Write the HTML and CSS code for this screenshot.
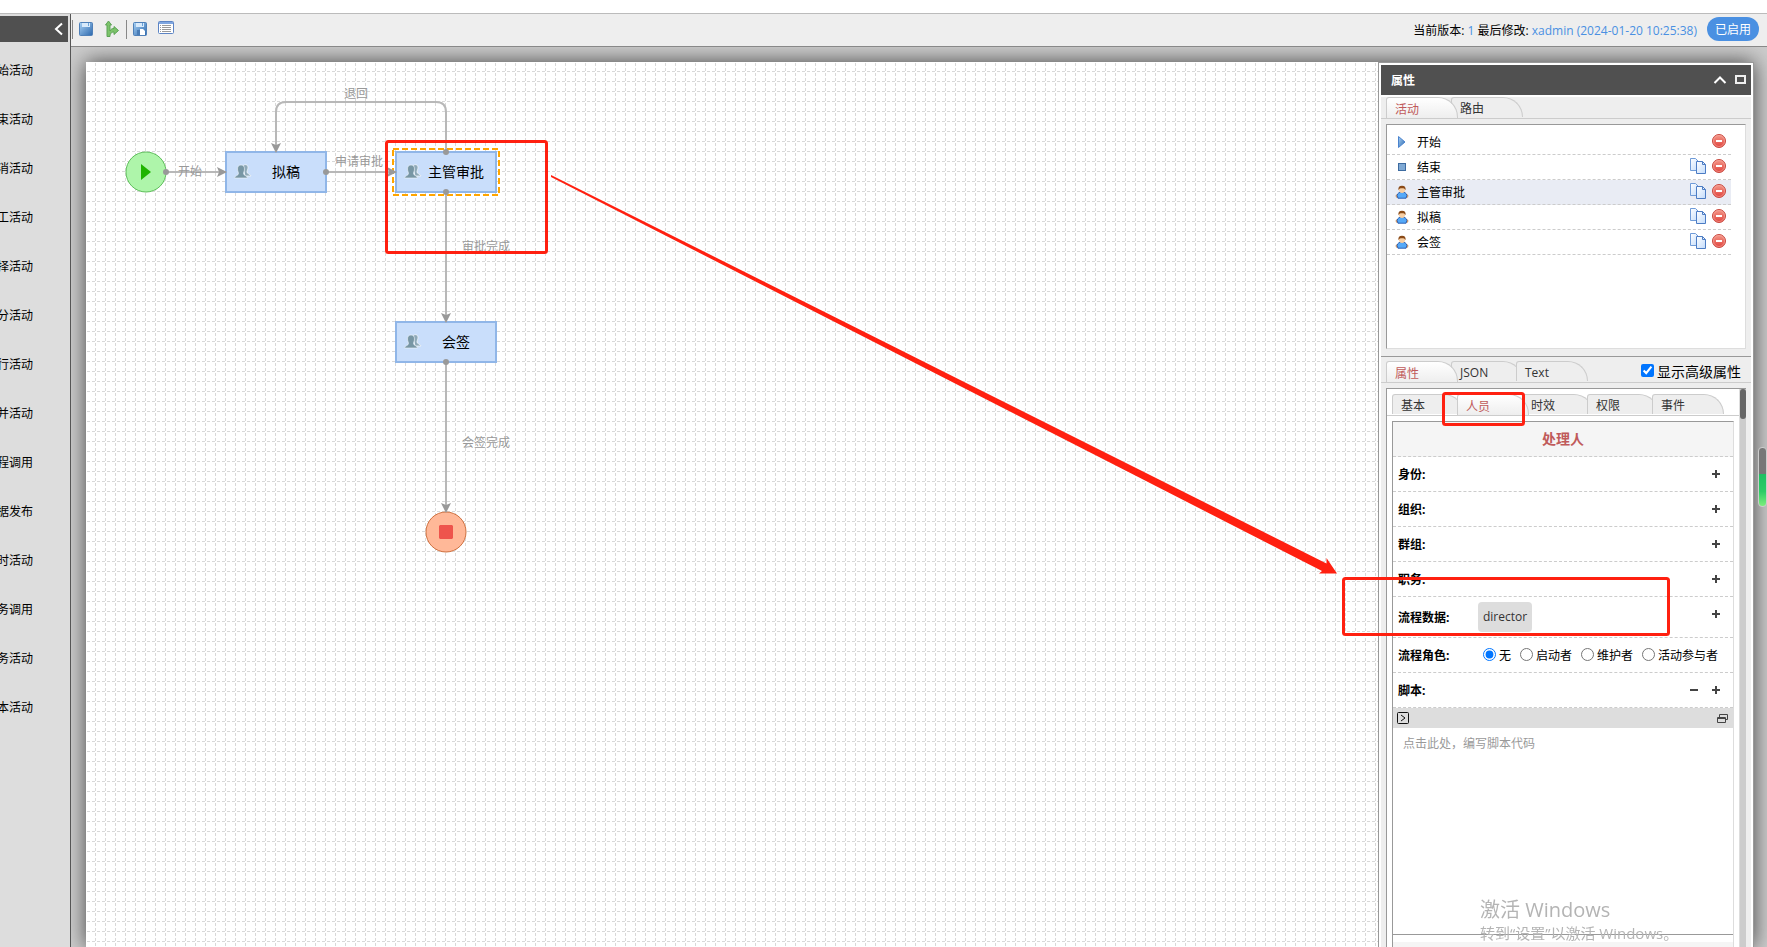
FILE: index.html
```html
<!DOCTYPE html>
<html lang="zh-CN">
<head>
  <meta charset="UTF-8" />
  <meta name="viewport" content="width=device-width, initial-scale=1.0"/>
  <title>流程设计</title>
  <link rel="stylesheet" href="styles.css">
</head>
<body>

  <!-- Shared icons -->
  <svg class="defs" width="0" height="0">
    <defs>
      <linearGradient id="blue" x1="0" y1="0" x2="1" y2="1">
        <stop offset="0" stop-color="#a9d2f5"/><stop offset="1" stop-color="#2c68ad"/>
      </linearGradient>
      <linearGradient id="red" x1="0" y1="0" x2="0" y2="1">
        <stop offset="0" stop-color="#f59a8b"/><stop offset="1" stop-color="#e0403a"/>
      </linearGradient>
      <linearGradient id="sheet" x1="0" y1="0" x2="1" y2="1">
        <stop offset="0" stop-color="#ffffff"/><stop offset="1" stop-color="#c3dcfb"/>
      </linearGradient>
    </defs>
    <symbol id="i-save" viewBox="0 0 16 16">
      <rect x="1.5" y="1.5" width="13" height="13" rx="1" fill="url(#blue)" stroke="#4f80b8"/>
      <rect x="4" y="2" width="8" height="4" fill="#d8eafb"/>
      <rect x="10" y="2" width="1" height="3" fill="#6ba3d8"/>
    </symbol>
    <symbol id="i-saveas" viewBox="0 0 16 16">
      <rect x="1.5" y="1.5" width="13" height="13" rx="1" fill="url(#blue)" stroke="#4f80b8"/>
      <rect x="4" y="2" width="8" height="4" fill="#d8eafb"/>
      <rect x="10" y="2" width="1" height="3" fill="#6ba3d8"/>
      <path d="M8 8h3l2 2v4H8z" fill="#fff"/>
      <rect x="5" y="9" width="3" height="5" fill="#4a7cb5"/>
    </symbol>
    <symbol id="i-branch" viewBox="0 0 16 18">
      <path d="M3 16.500V5H1.500L4.500 1 7.500 5H6v6c1-2 2-2.500 4-2.500V6.500l4.500 4-4.500 4V12c-2 0-4 1-4 4.500z" fill="#7cc36a" stroke="#5ba355"/>
    </symbol>
    <symbol id="i-list" viewBox="0 0 16 16">
      <rect x=".5" y=".5" width="15" height="12" rx="1" fill="#fff" stroke="#5c84c4"/>
      <rect x="1" y="1" width="14" height="2" fill="#7fa6e0"/>
      <path d="M2 4.500h1M4 4.500h9M2 6.500h1M4 6.500h9M2 8.500h1M4 8.500h9M2 10.500h1M4 10.500h9" stroke="#999"/>
    </symbol>
    <symbol id="i-play" viewBox="0 0 16 16">
      <path d="M4.500 2.500v11L11 8z" fill="url(#blue)" stroke="#4a83cf"/>
    </symbol>
    <symbol id="i-stop" viewBox="0 0 16 16">
      <rect x="4.500" y="4.500" width="7" height="7" fill="#7fa9d4" stroke="#3d6ba0"/>
    </symbol>
    <symbol id="i-user" viewBox="-1 -1 18 18">
      <circle cx="3" cy="12.500" r="1.800" fill="#f0b27a" stroke="#b8743a" stroke-width=".6"/>
      <circle cx="13" cy="12.500" r="1.800" fill="#f0b27a" stroke="#b8743a" stroke-width=".6"/>
      <path d="M2.500 12C3 9 5.500 8 8 8s5 1 5.500 4l-1 3h-9z" fill="#55a9f8" stroke="#2458ae"/>
      <circle cx="8" cy="5.500" r="3.500" fill="#f7cfa4"/>
      <path d="M4 6C3.500 2.500 5 1 8 1s4.500 1.500 4 5c-1-2-2-2.200-4-2.200S5 4 4 6z" fill="#8a4a17"/>
    </symbol>
    <symbol id="i-copy" viewBox="0 0 16 16">
      <path d="M.5.5h5l3 3v9h-8z" fill="url(#sheet)" stroke="#6f9bd8"/>
      <path d="M6.500 3.500h6l3 3v9h-9z" fill="url(#sheet)" stroke="#4c7cc4"/>
      <path d="M12.500 3.500v3h3" fill="none" stroke="#4c7cc4"/>
    </symbol>
    <symbol id="i-remove" viewBox="0 0 16 16">
      <circle cx="8" cy="8" r="6.500" fill="url(#red)" stroke="#c9483f"/>
      <circle cx="8" cy="8" r="5.500" fill="none" stroke="#f6aca2" stroke-width=".6"/>
      <rect x="5" y="7" width="6" height="2" fill="#fff"/>
    </symbol>
    <symbol id="i-plus" viewBox="0 0 16 16">
      <path d="M4 8h8M8 4v8" stroke="#444" stroke-width="2"/>
    </symbol>
    <symbol id="i-minus" viewBox="0 0 16 16">
      <path d="M4 8h8" stroke="#444" stroke-width="2"/>
    </symbol>
    <symbol id="i-people" viewBox="0 0 18 16">
      <path d="M9 2c1-2 5-2 5 1.500 0 2-1 3-1 4.500 0 2 3.500 2 4 4h-6z" fill="#8fa9b8" stroke="#f2f6fa" stroke-width=".8"/>
      <path d="M3.500 5c0-3 1.500-4 3.500-4s3.500 1 3.500 4c0 2-1 3-1 4.500 0 2 3.500 2 4 4.500H.5c.5-2.500 4-2.500 4-4.500 0-1.500-1-2.500-1-4.500z" fill="#7896a4" stroke="#f2f6fa" stroke-width=".6"/>
    </symbol>
  </svg>

  <div class="designer">
    <!-- Activity tools -->
    <aside class="sidebar">
      <div class="sidebar-head">
        <button class="bare" aria-label="collapse">
          <svg width="10" height="14" viewBox="0 0 10 14"><path d="M8 1.500L2 7l6 5.500" fill="none" stroke="#fff" stroke-width="2"/></svg>
        </button>
      </div>
      <ul class="tools">
        <li>始活动</li>
        <li>束活动</li>
        <li>消活动</li>
        <li>工活动</li>
        <li>择活动</li>
        <li>分活动</li>
        <li>行活动</li>
        <li>并活动</li>
        <li>程调用</li>
        <li>据发布</li>
        <li>时活动</li>
        <li>务调用</li>
        <li>务活动</li>
        <li>本活动</li>
      </ul>
    </aside>

    <main class="main">
      <div class="toolbar">
        <span class="sep first"></span>
        <button class="bare" aria-label="save"><svg width="16" height="16"><use href="#i-save"/></svg></button>
        <button class="bare" aria-label="branch"><svg width="16" height="18"><use href="#i-branch"/></svg></button>
        <span class="sep"></span>
        <button class="bare" aria-label="save as"><svg width="16" height="16"><use href="#i-saveas"/></svg></button>
        <button class="bare" aria-label="list"><svg width="16" height="16"><use href="#i-list"/></svg></button>
        <p class="version">当前版本: <span>1</span> 最后修改: <span>xadmin (2024-01-20 10:25:38)</span></p>
        <button class="status">已启用</button>
      </div>

      <div class="workspace">
        <div class="paper">
          <!-- Process diagram -->
          <svg class="canvas">
            <defs>
              <pattern id="grid" x="0" y="0" width="10" height="10" patternUnits="userSpaceOnUse">
                <path d="M1 9.500h3M6 9.500h3M9.500 1v3M9.500 6v3" stroke="#d8d8d8" fill="none"/>
              </pattern>
              <marker id="arrow" viewBox="0 0 10 10" refX="9" refY="5" markerWidth="10" markerHeight="10" markerUnits="userSpaceOnUse" orient="auto">
                <path d="M0 0l10 5-10 5 2-5z" fill="#999"/>
              </marker>
            </defs>
            <rect width="100%" height="100%" fill="url(#grid)"/>

            <g class="nodes">
              <circle cx="60" cy="110" r="20" fill="#aef5aa" stroke="#5fbf5c"/>
              <path d="M55 102l10 8-10 8z" fill="#1fb400"/>
              <rect x="140" y="90" width="100" height="40"/>
              <rect x="310" y="90" width="100" height="40"/>
              <rect x="310" y="260" width="100" height="40"/>
              <rect class="selected" x="307" y="87" width="106" height="46"/>
              <circle cx="360" cy="470" r="20" fill="#ffb898" stroke="#cf7140"/>
              <path d="M354 463h12l1 1v12l-1 1h-12l-1-1v-12z" fill="#ee544c"/>
              <use href="#i-people" x="148" y="102" width="18" height="16"/>
              <use href="#i-people" x="318" y="102" width="18" height="16"/>
              <use href="#i-people" x="318" y="272" width="18" height="16"/>
              <text x="200" y="115">拟稿</text>
              <text x="370" y="115">主管审批</text>
              <text x="370" y="285">会签</text>
            </g>

            <g class="routes">
              <path d="M80 110H140"/>
              <path d="M240 110H310"/>
              <path d="M360 90V50Q360 40 350 40H200Q190 40 190 50V90"/>
              <path d="M360 130V260"/>
              <path d="M360 300V450"/>
            </g>
            <g fill="#999">
              <circle cx="80" cy="110" r="3"/>
              <circle cx="240" cy="110" r="3"/>
              <circle cx="360" cy="90" r="3"/>
              <circle cx="360" cy="130" r="3"/>
              <circle cx="360" cy="300" r="3"/>
            </g>
            <g class="route-names">
              <text x="92" y="114">开始</text>
              <text x="249" y="104">申请审批</text>
              <text x="258" y="36">退回</text>
              <text x="376" y="189">审批完成</text>
              <text x="376" y="385">会签完成</text>
            </g>
          </svg>

          <!-- Property panel -->
          <section class="panel">
            <header class="panel-head">
              <h2>属性</h2>
              <button class="bare" aria-label="fold"><svg width="14" height="10" viewBox="0 0 14 10"><path d="M1.500 8L7 2.500 12.500 8" fill="none" stroke="#fff" stroke-width="2"/></svg></button>
              <button class="bare" aria-label="maximize"><svg width="12" height="10" viewBox="0 0 12 10"><rect x="2" y="1" width="9" height="7" fill="none" stroke="#eee" stroke-width="2"/></svg></button>
            </header>

            <div class="panel-body">
              <nav class="tabs">
                <button class="tab active">活动</button>
                <button class="tab">路由</button>
              </nav>
              <ul class="activities">
                <li><svg><use href="#i-play"/></svg><span>开始</span><button class="bare" aria-label="delete"><svg><use href="#i-remove"/></svg></button></li>
                <li><svg><use href="#i-stop"/></svg><span>结束</span><button class="bare" aria-label="copy"><svg><use href="#i-copy"/></svg></button><button class="bare" aria-label="delete"><svg><use href="#i-remove"/></svg></button></li>
                <li class="current"><svg><use href="#i-user"/></svg><span>主管审批</span><button class="bare" aria-label="copy"><svg><use href="#i-copy"/></svg></button><button class="bare" aria-label="delete"><svg><use href="#i-remove"/></svg></button></li>
                <li><svg><use href="#i-user"/></svg><span>拟稿</span><button class="bare" aria-label="copy"><svg><use href="#i-copy"/></svg></button><button class="bare" aria-label="delete"><svg><use href="#i-remove"/></svg></button></li>
                <li><svg><use href="#i-user"/></svg><span>会签</span><button class="bare" aria-label="copy"><svg><use href="#i-copy"/></svg></button><button class="bare" aria-label="delete"><svg><use href="#i-remove"/></svg></button></li>
              </ul>

              <div class="divider"></div>

              <nav class="tabs">
                <button class="tab active">属性</button>
                <button class="tab">JSON</button>
                <button class="tab">Text</button>
                <label class="advanced"><input type="checkbox" checked>显示高级属性</label>
              </nav>

              <div class="props">
                <div class="props-body">
                  <nav class="tabs">
                    <button class="tab">基本</button>
                    <button class="tab active">人员</button>
                    <button class="tab">时效</button>
                    <button class="tab">权限</button>
                    <button class="tab">事件</button>
                  </nav>
                  <div class="form">
                    <h3>处理人</h3>
                    <div class="row"><b>身份:</b><button class="bare" aria-label="add"><svg><use href="#i-plus"/></svg></button></div>
                    <div class="row"><b>组织:</b><button class="bare" aria-label="add"><svg><use href="#i-plus"/></svg></button></div>
                    <div class="row"><b>群组:</b><button class="bare" aria-label="add"><svg><use href="#i-plus"/></svg></button></div>
                    <div class="row"><b>职务:</b><button class="bare" aria-label="add"><svg><use href="#i-plus"/></svg></button></div>
                    <div class="row data"><b>流程数据:</b><span class="chip">director</span><button class="bare" aria-label="add"><svg><use href="#i-plus"/></svg></button></div>
                    <div class="row roles">
                      <b>流程角色:</b>
                      <label><input type="radio" name="role" checked>无</label>
                      <label><input type="radio" name="role">启动者</label>
                      <label><input type="radio" name="role">维护者</label>
                      <label><input type="radio" name="role">活动参与者</label>
                    </div>
                    <div class="row"><b>脚本:</b><button class="bare" aria-label="remove"><svg><use href="#i-minus"/></svg></button><button class="bare" aria-label="add"><svg><use href="#i-plus"/></svg></button></div>
                    <div class="script-bar">
                      <svg width="12" height="12" viewBox="0 0 12 12"><rect x=".5" y=".5" width="11" height="11" rx="1" fill="none" stroke="#111"/><path d="M4 3l4 3-4 3" fill="none" stroke="#111"/></svg>
                      <svg width="11" height="11" viewBox="0 0 11 11"><path d="M.5 4.500h8v5h-8zM.5 5.500h8M2.500 4V1.500h8v5H9" fill="none" stroke="#444"/></svg>
                    </div>
                    <textarea class="script" aria-label="脚本" placeholder="点击此处，编写脚本代码"></textarea>
                    <div class="next"></div>
                  </div>
                </div>
                <div class="scroll"><div class="thumb"></div></div>
              </div>
            </div>
          </section>
        </div>
      </div>
    </main>
  </div>

  <!-- Overlays -->
  <div class="battery"></div>
  <div class="activate">
    <p class="activate-title">激活 Windows</p>
    <p>转到“设置”以激活 Windows。</p>
  </div>
  <svg class="marks">
    <rect x="386.500" y="141.500" width="160" height="111" rx="2"/>
    <rect x="1443.500" y="393.500" width="80" height="31" rx="2"/>
    <rect x="1343.500" y="578.500" width="325" height="56" rx="2"/>
    <path d="M551 175L1326.500 563.500 1326.500 558 1337 573.500H1319L1322 571 551 177z"/>
  </svg>

</body>
</html>
```
FILE: styles.css
```css
* {
  box-sizing: border-box;
}

body {
  margin: 0;
  height: 100vh;
  padding-top: 13px;
  overflow: hidden;
  background: #fff;
  color: #000;
  font-family: "Open Sans", "Noto Sans CJK SC", sans-serif;
  font-size: 12px;
  line-height: 16px;
}

ul, p, h2, h3 {
  margin: 0;
  padding: 0;
  list-style: none;
}

button, input, textarea {
  font-family: inherit;
  font-size: 12px;
}

svg {
  display: block;
}

.defs {
  position: absolute;
}

.bare {
  padding: 0;
  border: 0;
  background: none;
}

.designer {
  display: flex;
  height: 100%;
  border-top: 1px solid #bbb;
}

/* left tools */
.sidebar {
  width: 71px;
  padding-top: 2px;
  overflow: hidden;
  background: #ddd;
  border-right: 1px solid #555;
}

.sidebar-head {
  display: flex;
  justify-content: flex-end;
  align-items: center;
  height: 26px;
  margin-right: 2px;
  padding-right: 4px;
  background: #505050;
}

.tools {
  padding-top: 4px;
}

.tools li {
  height: 49px;
  margin-left: -3px;
  line-height: 50px;
  white-space: nowrap;
}

.main {
  flex: 1;
  display: flex;
  flex-direction: column;
  min-width: 0;
}

/* toolbar */
.toolbar {
  display: flex;
  align-items: center;
  gap: 10px;
  height: 33px;
  padding: 0 8px 3px 1px;
  background: #eee;
  border-bottom: 1px solid #888;
}

.toolbar .sep {
  width: 1px;
  height: 19px;
  margin: 2px -5px 0 -4px;
  background: #888;
}

.toolbar .sep.first {
  margin-left: 0;
}

.version {
  margin-left: auto;
  padding-top: 4px;
}

.version span {
  color: #4a90e2;
}

.status {
  height: 24px;
  padding: 0 8px;
  border: 0;
  border-radius: 12px;
  background: #4a90e2;
  color: #fff;
}

/* drawing area */
.workspace {
  flex: 1;
  display: flex;
  min-height: 0;
  padding: 15px 13px 0 15px;
  overflow: hidden;
  background: #ccc;
}

.paper {
  flex: 1;
  display: flex;
  background: #fff;
  box-shadow: 0 0 20px #444;
}

.canvas {
  flex: 1;
  height: 100%;
  min-width: 0;
}

.nodes rect {
  fill: #c9defb;
  stroke: #90b6e8;
  stroke-width: 2;
}

.nodes rect.selected {
  fill: none;
  stroke: #ffa500;
  stroke-dasharray: 6 3;
}

.nodes text {
  font-size: 14px;
  text-anchor: middle;
}

.routes path {
  fill: none;
  stroke: #b8b8b8;
  stroke-width: 2;
  marker-end: url(#arrow);
}

.route-names text {
  fill: #999;
}

/* property panel */
.panel {
  display: flex;
  flex-direction: column;
  width: 376px;
  padding: 2px 2px 0;
  border: 1px solid #999;
  border-bottom: 0;
  background: #fff;
}

.panel-head {
  display: flex;
  align-items: center;
  gap: 7px;
  height: 30px;
  margin-bottom: 2px;
  padding: 0 5px 0 10px;
  background: #505050;
  color: #fff;
}

.panel-head h2 {
  flex: 1;
  padding-top: 2px;
  font-size: 12px;
}

.panel-body {
  flex: 1;
  display: flex;
  flex-direction: column;
  min-height: 0;
  background: #eee;
}

.tabs {
  display: flex;
  flex: none;
  height: 22px;
  padding-left: 5px;
  border-bottom: 1px solid #ccc;
}

.tab {
  position: relative;
  width: 72px;
  height: 20px;
  margin-right: -7px;
  padding: 1px 0 0 8px;
  border: 1px solid #ccc;
  border-bottom: 0;
  border-radius: 3px 20px 0 0;
  background: #eee;
  color: #333;
  text-align: left;
}

.tab.active {
  z-index: 1;
  height: 21px;
  background: linear-gradient(#fff, #eee);
  color: #c05a5a;
}

.advanced {
  display: flex;
  align-items: center;
  gap: 3px;
  margin-left: auto;
  padding-right: 10px;
  font-size: 14px;
}

.advanced input {
  width: 13px;
  height: 13px;
  margin: 0 0 3px;
}

.activities {
  height: 225px;
  margin: 5px 5px 7px;
  padding: 5px 14px 0 0;
  background: #fff;
  border: 1px solid #ddd;
  border-top-color: #999;
  border-left-color: #999;
}

.activities li {
  display: flex;
  align-items: center;
  gap: 5px;
  height: 25px;
  padding: 0 4px 0 7px;
  border-bottom: 1px dashed #ccc;
}

.activities svg {
  width: 16px;
  height: 16px;
}

.activities span {
  flex: 1;
  padding: 2px 0 0 2px;
}

.activities .bare {
  padding-bottom: 2px;
}

.activities .current {
  background: #e9ecf4;
}

.divider {
  height: 5px;
  border-top: 1px solid #999;
}

.props {
  flex: 1;
  display: flex;
  min-height: 0;
  margin: 5px 5px 0;
  background: #fff;
  border-top: 1px solid #999;
  border-left: 1px solid #999;
}

.props-body {
  flex: 1;
  padding-top: 5px;
  overflow: hidden;
}

.scroll {
  width: 7px;
  background: #ccc;
  border-left: 1px solid #ddd;
}

.thumb {
  height: 30px;
  border-radius: 3px;
  background: #666;
}

.form {
  margin: 5px;
  border: 1px solid #ddd;
  border-top-color: #999;
  border-left-color: #999;
}

.form h3 {
  height: 35px;
  background: #f5f5f5;
  border-bottom: 1px dashed #ccc;
  color: #c05a5a;
  font-size: 14px;
  line-height: 34px;
  text-align: center;
}

.row {
  display: flex;
  align-items: center;
  height: 35px;
  padding: 0 9px 0 5px;
  border-bottom: 1px dashed #ccc;
}

.row b {
  flex: 1;
  padding-top: 2px;
}

.row .bare + .bare {
  margin-left: 6px;
}

.row svg {
  width: 16px;
  height: 16px;
}

.row.data {
  height: 41px;
}

.row.data b {
  flex: none;
  width: 80px;
}

.row.data .bare {
  margin: 0 0 6px auto;
}

.chip {
  padding: 7px 5px;
  border-radius: 4px;
  background: #ddd;
  color: #333;
}

.row.roles {
  gap: 9px;
}

.row.roles b {
  flex: none;
  width: 76px;
}

.row.roles label {
  display: flex;
  align-items: center;
  gap: 3px;
  padding-top: 2px;
  white-space: nowrap;
}

.row.roles input {
  width: 13px;
  height: 13px;
  margin: 0 0 4px;
}

.script-bar {
  display: flex;
  justify-content: space-between;
  align-items: center;
  height: 20px;
  padding: 0 5px 0 4px;
  background: #ddd;
}

.script {
  display: block;
  width: 100%;
  height: 207px;
  padding: 8px 10px;
  border: 0;
  border-bottom: 1px solid #999;
  resize: none;
  line-height: 16px;
}

.script::placeholder {
  color: #999;
}

.next {
  height: 40px;
  margin-top: 7px;
  background: #f5f5f5;
}

/* things floating over the page */
.battery {
  position: fixed;
  top: 447px;
  right: 0;
  width: 9px;
  height: 60px;
  border: 1px solid #ccc;
  border-radius: 4px;
  background: linear-gradient(#777 45%, #1fbf62 45%, #2ecc66 75%, #7dee7d);
}

.activate {
  position: fixed;
  right: 92px;
  bottom: 3px;
  z-index: 2;
  width: 195px;
  color: #b4b4b4;
  font-size: 15px;
  line-height: 22px;
  white-space: nowrap;
}

.activate-title {
  font-size: 20px;
  line-height: 24px;
}

.marks {
  position: fixed;
  top: 0;
  left: 0;
  z-index: 2;
  width: 100%;
  height: 100%;
  pointer-events: none;
}

.marks rect {
  fill: none;
  stroke: #ff2010;
  stroke-width: 3;
}

.marks path {
  fill: #ff2010;
}
```
